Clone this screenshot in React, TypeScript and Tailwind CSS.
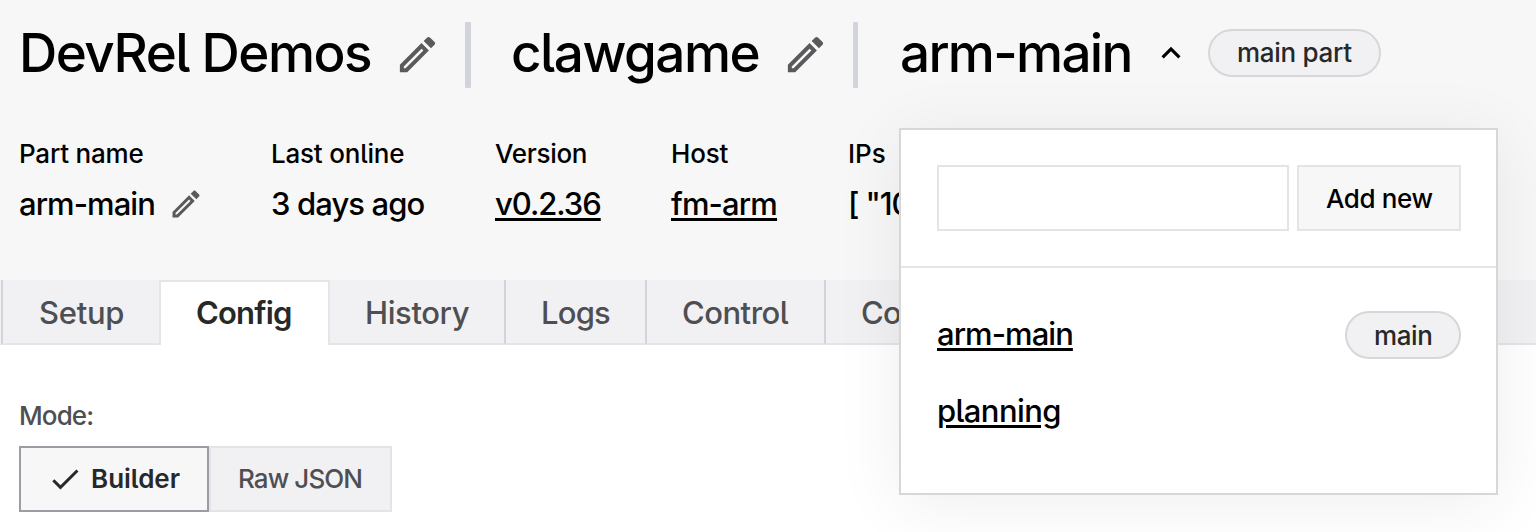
import React from "react";

const PENCIL =
  "M14.06,9L15,9.94L5.92,19H5V18.08L14.06,9M17.66,3C17.41,3 17.15,3.1 16.96,3.29L15.13,5.12L18.88,8.87L20.71,7.04C21.1,6.65 21.1,6 20.71,5.63L18.37,3.29C18.17,3.09 17.92,3 17.66,3M14.06,6.19L3,17.25V21H6.75L17.81,9.94L14.06,6.19Z";
const CHEVRON_UP = "M7.41,15.41L12,10.83L16.59,15.41L18,14L12,8L6,14L7.41,15.41Z";
const CHECK = "M21,7L9,19L3.5,13.5L4.91,12.09L9,16.17L19.59,5.59L21,7Z";

function Icon({ d, className }: { d: string; className: string }) {
  return (
    <svg viewBox="0 0 24 24" fill="currentColor" className={`shrink-0 ${className}`}>
      <path d={d} />
    </svg>
  );
}

function Pill({ children, className }: { children: React.ReactNode; className: string }) {
  return (
    <span
      className={`flex h-12 shrink-0 items-center rounded-full border-2 border-[#d7d7d9] bg-[#f1f1f4] pl-[27px] text-[26px] text-[#282829] ${className}`}
    >
      {children}
    </span>
  );
}

function Field({ label, labelClass, className, children }: {
  label: string;
  labelClass: string;
  className: string;
  children: React.ReactNode;
}) {
  return (
    <div className={`shrink-0 ${className}`}>
      <dt className={`h-8 text-[26px] leading-8 ${labelClass}`}>{label}</dt>
      <dd className="mt-[14px] flex h-10 items-center text-[31px] leading-10">{children}</dd>
    </div>
  );
}

const link = "underline decoration-[3px] underline-offset-[3px]";

function PartMenu() {
  return (
    <div className="absolute left-[899px] top-[128px] h-[367px] w-[599px] border-2 border-[#d7d7d9] bg-white shadow-[0_8px_64px_rgba(0,0,0,0.07)]">
      <div className="flex h-[138px] gap-2 border-b-2 border-[#e4e4e9] pl-9 pt-[35px]">
        <input aria-label="Part" className="h-[66px] w-[352px] shrink-0 border-2 border-[#e4e4e6] bg-white outline-none" />
        <button className="h-[66px] w-[164px] shrink-0 border-2 border-[#e4e4e6] bg-[#f7f7f8] pl-[27px] text-left text-[26px] tracking-[-0.4px]">
          Add new
        </button>
      </div>
      <ul className="pl-9 pr-[35px] pt-[43px] text-[31px]">
        <li className="flex h-12 items-center justify-between">
          <a className={`-mt-0.5 tracking-[-0.95px] ${link}`}>arm-main</a>
          <Pill className="w-[116px] tracking-[-0.4px]">main</Pill>
        </li>
        <li className="mt-[29px] flex h-12 items-center">
          <a className={`-mt-0.5 tracking-[-0.6px] ${link}`}>planning</a>
        </li>
      </ul>
    </div>
  );
}

export default function App() {
  return (
    <div className="relative h-[532px] w-[1536px] overflow-hidden whitespace-nowrap bg-white font-['Inter','Liberation_Sans',sans-serif] font-[450] text-black [font-feature-settings:'cv05']">
      <header className="h-[280px] bg-[#f7f7f7]">
        <div className="flex h-[108px] items-center pl-[19px] text-[53px] leading-[60px]">
          <h1 className="-mt-0.5 w-[375px] shrink-0 tracking-[-1.5px]">DevRel Demos</h1>
          <Icon d={PENCIL} className="size-[47px] text-[#5a5a5c]" />
          <span className="ml-[24px] mt-0.5 h-[66px] w-1.5 shrink-0 rounded-[1px] bg-[#d1d5db]" />
          <h2 className="-mt-0.5 ml-[40px] w-[271px] shrink-0 tracking-[-1.5px]">clawgame</h2>
          <Icon d={PENCIL} className="size-[47px] text-[#5a5a5c]" />
          <span className="ml-[24px] mt-0.5 h-[66px] w-[5px] shrink-0 rounded-[1px] bg-[#d1d5db]" />
          <h2 className="-mt-0.5 ml-[42px] w-[252px] shrink-0 tracking-[-1.7px]">arm-main</h2>
          <Icon d={CHEVRON_UP} className="-mt-0.5 size-[38px]" />
          <Pill className="-mt-0.5 ml-[18px] w-[173px] tracking-[-0.3px]">main part</Pill>
        </div>
        <dl className="flex pl-[19px] pt-[30px]">
          <Field label="Part name" className="w-[252px]" labelClass="tracking-[-0.2px]">
            <span className="w-[149px] tracking-[-0.95px]">arm-main</span>
            <Icon d={PENCIL} className="size-9 text-[#5a5a5c]" />
          </Field>
          <Field label="Last online" className="w-[224px]" labelClass="tracking-[-0.2px]">
            <span className="tracking-[-0.9px]">3 days ago</span>
          </Field>
          <Field label="Version" className="w-[176px]" labelClass="tracking-[-0.3px]">
            <a className={`tracking-[-1.05px] ${link}`}>v0.2.36</a>
          </Field>
          <Field label="Host" className="w-[177px]" labelClass="tracking-[-0.2px]">
            <a className={`tracking-[-0.85px] ${link}`}>fm-arm</a>
          </Field>
          <Field label="IPs" className="w-[60px]" labelClass="tracking-[0px]">
            <span className="tracking-[-1.1px]">[ "10</span>
          </Field>
        </dl>
      </header>

      <nav className="flex h-[65px] bg-[#f1f1f4] pl-px text-[31px] leading-[66px] text-[#4e4f52]">
        <a className="w-[158px] border-b-2 border-l-2 border-b-[#e4e4e9] border-l-[#d1d5db] pl-9 tracking-[-0.3px]">Setup</a>
        <a className="w-[171px] border-x-2 border-t-2 border-[#e4e4e9] bg-white pl-[35px] font-semibold leading-[62px] tracking-[-0.8px] text-[#282829]">Config</a>
        <a className="w-[176px] border-b-2 border-r-2 border-b-[#e4e4e9] border-r-[#d1d5db] pl-[35px] tracking-[-0.4px]">History</a>
        <a className="w-[141px] border-b-2 border-r-2 border-b-[#e4e4e9] border-r-[#d1d5db] pl-[35px] tracking-[-0.8px]">Logs</a>
        <a className="w-[179px] border-b-2 border-r-2 border-b-[#e4e4e9] border-r-[#d1d5db] pl-[35px] tracking-[-0.5px]">Control</a>
        <a className="flex-1 border-b-2 border-[#e4e4e9] pl-[35px] tracking-[-0.8px]">Co</a>
      </nav>

      <main className="pl-[19px] pt-[55px]">
        <p className="h-8 text-[26px] leading-8 tracking-[-0.9px] text-[#4e4f52]">Mode:</p>
        <div className="mt-[14px] flex text-[26px]">
          <button className="flex h-[66px] w-[190px] items-center border-2 border-[#9c9ca4] bg-[#f7f7f8] pb-0.5 pl-[26px] font-semibold tracking-[0px] text-[#282829]">
            <Icon d={CHECK} className="mr-[8px] mt-0.5 size-9" />
            Builder
          </button>
          <button className="h-[66px] w-[183px] border-2 border-[#e4e4e6] bg-[#f1f1f4] pb-0.5 pl-[27px] text-left tracking-[-0.9px] text-[#4e4f52]">
            Raw JSON
          </button>
        </div>
      </main>

      <PartMenu />
    </div>
  );
}
